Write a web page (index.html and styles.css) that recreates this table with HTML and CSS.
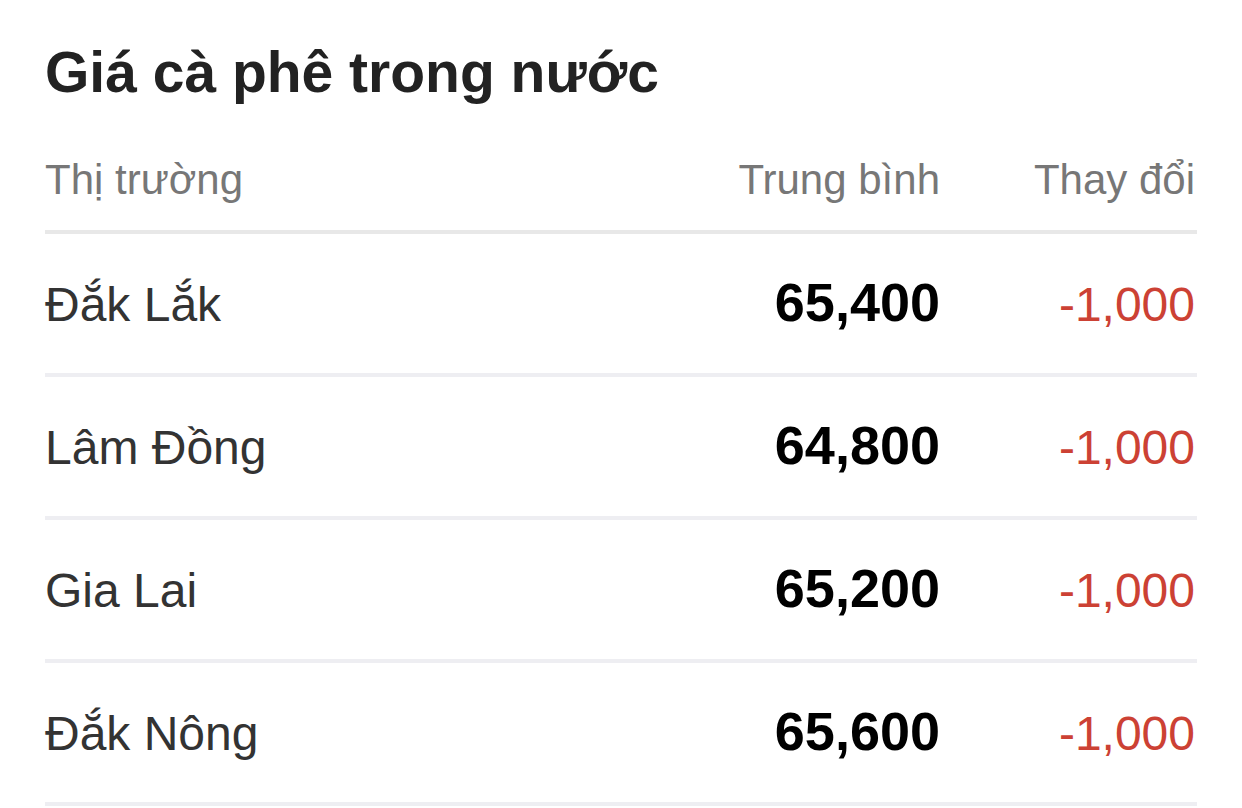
FILE: index.html
```html
<!DOCTYPE html>
<html lang="vi">
<head>
<meta charset="utf-8">
<title>Giá cà phê trong nước</title>
<link rel="stylesheet" href="styles.css">
</head>
<body>
<main class="panel">
  <h1 class="title">Giá cà phê trong nước</h1>
  <div class="table">
    <div class="row head">
      <div class="cell name">Thị trường</div>
      <div class="cell num">Trung bình</div>
      <div class="cell num last">Thay đổi</div>
    </div>
    <div class="row">
      <div class="cell name">Đắk Lắk</div>
      <div class="cell num price">65,400</div>
      <div class="cell num change last">-1,000</div>
    </div>
    <div class="row">
      <div class="cell name">Lâm Đồng</div>
      <div class="cell num price">64,800</div>
      <div class="cell num change last">-1,000</div>
    </div>
    <div class="row">
      <div class="cell name">Gia Lai</div>
      <div class="cell num price">65,200</div>
      <div class="cell num change last">-1,000</div>
    </div>
    <div class="row">
      <div class="cell name">Đắk Nông</div>
      <div class="cell num price">65,600</div>
      <div class="cell num change last">-1,000</div>
    </div>
  </div>
</main>
</body>
</html>
```

FILE: styles.css
```css
html, body {
  margin: 0;
  padding: 0;
  background: #ffffff;
}

body {
  font-family: "Liberation Sans", Arial, sans-serif;
}

.panel {
  padding: 40px 45px 0;
}

.title {
  margin: 0;
  font-size: 57px;
  line-height: 64px;
  font-weight: 700;
  color: #222222;
}

.table {
  margin-top: 52px;
}

.row {
  display: grid;
  grid-template-columns: 1fr 300px 257px;
  align-items: baseline;
  padding-top: 40px;
  height: 99px;
  border-bottom: 4px solid #eeeef2;
}

.row.head {
  padding-top: 0;
  height: 74px;
  border-bottom-color: #e8e8e8;
  font-size: 42px;
  line-height: 48px;
  color: #777777;
}

.cell {
  white-space: nowrap;
}

.row:not(.head) .cell {
  line-height: 56px;
}

.name {
  text-align: left;
}

.row:not(.head) .name {
  font-size: 48px;
  color: #333333;
}

.num {
  text-align: right;
}

.last {
  padding-right: 2px;
}

.price {
  font-size: 54px;
  font-weight: 700;
  color: #000000;
}

.change {
  font-size: 48px;
  color: #cc4134;
}
```
